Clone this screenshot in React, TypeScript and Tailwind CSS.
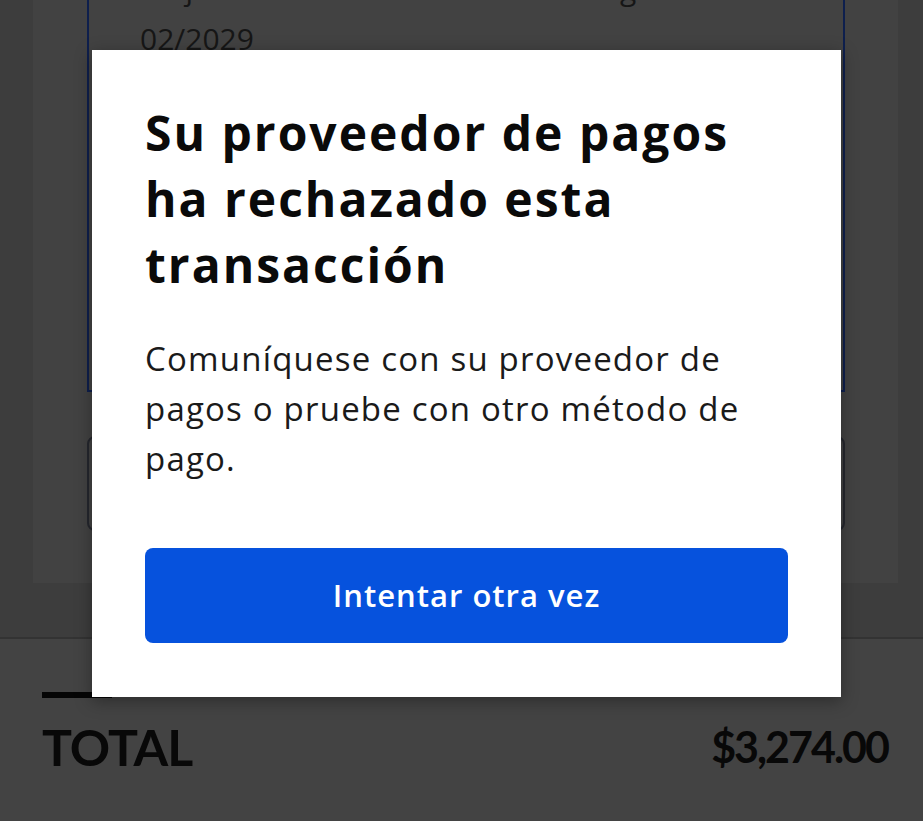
export default function App() {
  return (
    <div className="relative h-[821px] w-[923px] overflow-hidden bg-[#3d3d3d] font-['Open_Sans',sans-serif]">
      {/* page underneath the overlay */}
      <div className="flex h-full flex-col">
        <div className="ml-[33px] mr-[25px] mt-[-60px] flex h-[643px] flex-col bg-[#424242]">
          <div className="ml-[54px] mr-[53px] flex h-[452px] flex-col border-x-2 border-b-2 border-[#0e1f4d] pl-[51px] text-[30px] leading-[50px] text-[#161616]">
            <div className="mt-[24px] whitespace-nowrap">Tarjeta Visa terminada en 4242 · vigente hasta</div>
            <div>02/2029</div>
          </div>
          <div className="ml-[54px] mr-[53px] mt-[44px] h-[95px] rounded-lg border-2 border-[#25272e]" />
        </div>
        <div className="mt-[54px] flex-1 border-t-2 border-[#333333] bg-[#434343] px-[42px] font-['Lato',sans-serif]">
          <div className="mt-[53px] h-[6px] w-[70px] bg-[#050505]" />
          <div className="mt-[26px] flex items-center justify-between text-[#080808]">
            <span className="text-[50px] font-bold leading-[46px] tracking-[-1px]">TOTAL</span>
            <span className="mr-[-7px] text-[43px] font-bold leading-[46px] tracking-[-2px]">$3,274.00</span>
          </div>
        </div>
      </div>

      {/* dialog */}
      <div className="absolute left-[92px] top-[50px] flex h-[647px] w-[749px] flex-col bg-white px-[53px] pt-[50px] shadow-[0_4px_16px_rgba(0,0,0,0.35)]">
        <h2 className="whitespace-nowrap text-[48px] font-bold leading-[66px] tracking-[2px] text-[#0a0a0a]">
          Su proveedor de pagos
          <br />
          ha rechazado esta
          <br />
          transacción
        </h2>
        <p className="mt-[36px] whitespace-nowrap text-[33px] leading-[50px] tracking-[1.2px] text-[#1a1a1a]">
          Comuníquese con su proveedor de
          <br />
          pagos o pruebe con otro método de
          <br />
          pago.
        </p>
        <button className="mt-[64px] flex h-[95px] w-full shrink-0 items-center justify-center rounded-lg bg-[#0652dd] text-[31px] font-semibold tracking-[1px] text-white">
          Intentar otra vez
        </button>
      </div>
    </div>
  );
}
